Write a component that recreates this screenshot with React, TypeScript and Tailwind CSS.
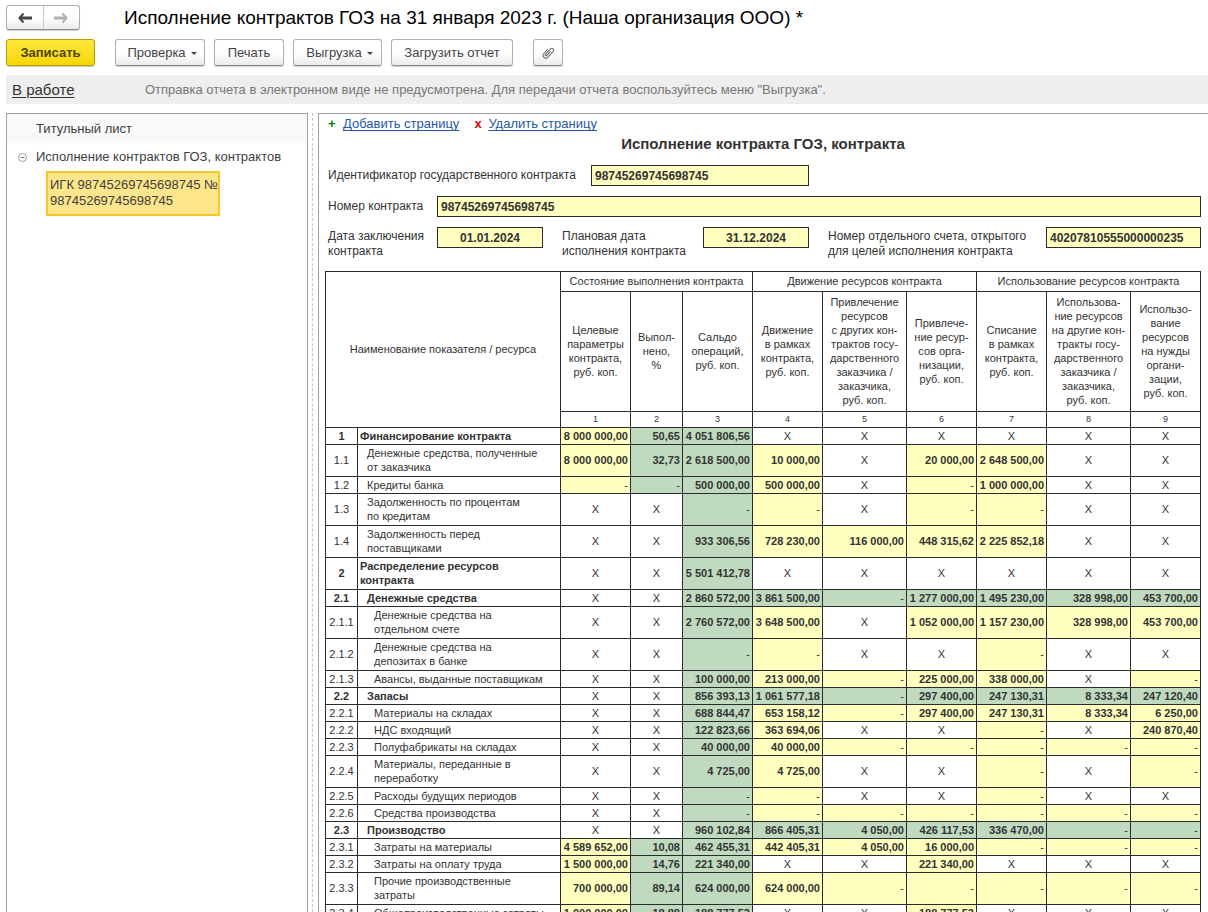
import { ReactNode } from "react";

type Row = { code: string; name: string; level: number; bold?: boolean; values: string };

const groups = [
  "Состояние выполнения контракта",
  "Движение ресурсов контракта",
  "Использование ресурсов контракта",
];

const columns = [
  "Целевые\nпараметры\nконтракта,\nруб. коп.",
  "Выпол-\nнено,\n%",
  "Сальдо\nопераций,\nруб. коп.",
  "Движение\nв рамках\nконтракта,\nруб. коп.",
  "Привлечение\nресурсов\nс других кон-\nтрактов госу-\nдарственного\nзаказчика /\nзаказчика,\nруб. коп.",
  "Привлече-\nние ресур-\nсов орга-\nнизации,\nруб. коп.",
  "Списание\nв рамках\nконтракта,\nруб. коп.",
  "Использова-\nние ресурсов\nна другие кон-\nтракты госу-\nдарственного\nзаказчика /\nзаказчика,\nруб. коп.",
  "Использо-\nвание\nресурсов\nна нужды\nоргани-\nзации,\nруб. коп.",
];

const rows: Row[] = [
  { code: "1", name: "Финансирование контракта", level: 0, bold: true, values: "8 000 000,00|50,65|4 051 806,56|X|X|X|X|X|X" },
  { code: "1.1", name: "Денежные средства, полученные\nот заказчика", level: 1, values: "8 000 000,00|32,73|2 618 500,00|10 000,00|X|20 000,00|2 648 500,00|X|X" },
  { code: "1.2", name: "Кредиты банка", level: 1, values: "-|-|500 000,00|500 000,00|X|-|1 000 000,00|X|X" },
  { code: "1.3", name: "Задолженность по процентам\nпо кредитам", level: 1, values: "X|X|-|-|X|-|-|X|X" },
  { code: "1.4", name: "Задолженность перед\nпоставщиками", level: 1, values: "X|X|933 306,56|728 230,00|116 000,00|448 315,62|2 225 852,18|X|X" },
  { code: "2", name: "Распределение ресурсов\nконтракта", level: 0, bold: true, values: "X|X|5 501 412,78|X|X|X|X|X|X" },
  { code: "2.1", name: "Денежные средства", level: 1, bold: true, values: "X|X|2 860 572,00|3 861 500,00|-|1 277 000,00|1 495 230,00|328 998,00|453 700,00" },
  { code: "2.1.1", name: "Денежные средства на\nотдельном счете", level: 2, values: "X|X|2 760 572,00|3 648 500,00|X|1 052 000,00|1 157 230,00|328 998,00|453 700,00" },
  { code: "2.1.2", name: "Денежные средства на\nдепозитах в банке", level: 2, values: "X|X|-|-|X|X|-|X|X" },
  { code: "2.1.3", name: "Авансы, выданные поставщикам", level: 2, values: "X|X|100 000,00|213 000,00|-|225 000,00|338 000,00|X|-" },
  { code: "2.2", name: "Запасы", level: 1, bold: true, values: "X|X|856 393,13|1 061 577,18|-|297 400,00|247 130,31|8 333,34|247 120,40" },
  { code: "2.2.1", name: "Материалы на складах", level: 2, values: "X|X|688 844,47|653 158,12|-|297 400,00|247 130,31|8 333,34|6 250,00" },
  { code: "2.2.2", name: "НДС входящий", level: 2, values: "X|X|122 823,66|363 694,06|X|X|-|X|240 870,40" },
  { code: "2.2.3", name: "Полуфабрикаты на складах", level: 2, values: "X|X|40 000,00|40 000,00|-|-|-|-|-" },
  { code: "2.2.4", name: "Материалы, переданные в\nпереработку", level: 2, values: "X|X|4 725,00|4 725,00|X|X|-|X|-" },
  { code: "2.2.5", name: "Расходы будущих периодов", level: 2, values: "X|X|-|-|X|X|-|X|X" },
  { code: "2.2.6", name: "Средства производства", level: 2, values: "X|X|-|-|-|-|-|-|-" },
  { code: "2.3", name: "Производство", level: 1, bold: true, values: "X|X|960 102,84|866 405,31|4 050,00|426 117,53|336 470,00|-|-" },
  { code: "2.3.1", name: "Затраты на материалы", level: 2, values: "4 589 652,00|10,08|462 455,31|442 405,31|4 050,00|16 000,00|-|-|-" },
  { code: "2.3.2", name: "Затраты на оплату труда", level: 2, values: "1 500 000,00|14,76|221 340,00|X|X|221 340,00|X|X|X" },
  { code: "2.3.3", name: "Прочие производственные\nзатраты", level: 2, values: "700 000,00|89,14|624 000,00|624 000,00|-|-|-|-|-" },
  { code: "2.3.4", name: "Общепроизводственные затраты", level: 2, values: "1 000 000,00|18,88|188 777,53|X|X|188 777,53|X|X|X" },
];

const indents = ["pl-[2px]", "pl-[9px]", "pl-4"];

// computed cells are green, editable ones are yellow
const cellClass = (row: Row, value: string, index: number) => {
  if (value === "X") return "text-center";
  const computed = index === 1 || index === 2 || (row.bold && row.level === 1);
  const weight = value === "-" ? "font-normal" : "font-bold";
  return computed
    ? `bg-[#c0dac0] text-right pr-[2px] ${weight}`
    : `bg-[#ffffc0] text-right pr-[2px] ${weight}`;
};

const ToolButton = ({ width, children, label }: { width: string; children: ReactNode; label?: string }) => (
  <button
    type="button"
    aria-label={label}
    className={`${width} h-[27px] flex items-center justify-center rounded-[3px] border border-[#b0b0b0] border-b-[#8c8c8c] bg-linear-to-b from-white from-50% to-[#ebebeb] shadow-[0_1px_1px_#d0d0d0] text-[13px] text-[#444]`}
  >
    {children}
  </button>
);

const Caret = () => (
  <svg width="6" height="3" viewBox="0 0 6 3" className="ml-[5px] mt-[2px]">
    <path d="M0 0h6L3 3z" fill="#444" />
  </svg>
);

const Arrow = ({ color, flip }: { color: string; flip?: boolean }) => (
  <svg width="14" height="12" viewBox="0 0 14 12" className={flip ? "rotate-180" : ""}>
    <path d="M5.500 1.500 1.500 6l4 4.500" fill="none" stroke={color} strokeWidth="2" />
    <path d="M1.500 6H14" fill="none" stroke={color} strokeWidth="3" />
  </svg>
);

const Clip = () => (
  <svg width="14" height="14" viewBox="0 0 14 14">
    <path
      transform="rotate(42 7 7)"
      d="M4.200 5v5.200a2.800 2.800 0 0 0 5.600 0V2.600a1.900 1.900 0 0 0-3.800 0v7.200a.9.9 0 0 0 1.800 0V4.500"
      fill="none"
      stroke="#666"
      strokeLinecap="round"
    />
  </svg>
);

const Header = () => (
  <header>
    <div className="flex items-center">
      <div className="flex h-[25px] w-[74px] rounded-[3px] border border-[#b0b0b0] border-b-[#8c8c8c] bg-linear-to-b from-white from-50% to-[#ebebeb] shadow-[0_1px_1px_#d0d0d0]">
        <button type="button" aria-label="Назад" className="flex flex-1 items-center justify-center border-r border-[#c8c8c8]">
          <Arrow color="#444" />
        </button>
        <button type="button" aria-label="Вперед" className="flex flex-1 items-center justify-center">
          <Arrow color="#b0b0b0" flip />
        </button>
      </div>
      <h1 className="ml-11 text-[19px] leading-6 text-black">
        Исполнение контрактов ГОЗ на 31 января 2023 г. (Наша организация ООО) *
      </h1>
    </div>

    <div className="mt-[9px] flex items-center gap-[9px]">
      <button
        type="button"
        className="mr-[11px] h-[27px] w-[89px] rounded-[3px] border border-[#b89f00] bg-linear-to-b from-[#ffe83a] to-[#f7d600] text-[13px] font-bold text-[#4d4600] shadow-[0_1px_1px_#c8c8c8]"
      >
        Записать
      </button>
      <ToolButton width="w-[90px]">
        <span className="ml-1">Проверка</span>
        <Caret />
      </ToolButton>
      <ToolButton width="w-[70px]">Печать</ToolButton>
      <ToolButton width="w-[89px]">
        <span className="ml-1">Выгрузка</span>
        <Caret />
      </ToolButton>
      <ToolButton width="w-[122px]">Загрузить отчет</ToolButton>
      <div className="ml-[11px]">
        <ToolButton width="w-[30px]" label="Присоединенные файлы">
          <Clip />
        </ToolButton>
      </div>
    </div>

    <div className="mt-[9px] flex h-[29px] items-center bg-[#eee] pl-[6px]">
      <a href="#" className="w-[133px] pt-px text-[15px] text-[#333] underline underline-offset-2">
        В работе
      </a>
      <p className="text-[13px] text-[#777]">
        Отправка отчета в электронном виде не предусмотрена. Для передачи отчета воспользуйтесь меню "Выгрузка".
      </p>
    </div>
  </header>
);

const Sidebar = () => (
  <nav className="w-[302px] shrink-0 border border-b-0 border-[#a0a0a0] text-[13px] text-[#404040]">
    <a href="#" className="block h-[29px] bg-[#f9f9f9] pl-[29px] leading-[29px]">
      Титульный лист
    </a>
    <div className="flex h-7 items-center">
      <button type="button" aria-label="Свернуть" className="mr-[9px] ml-[11px]">
        <svg width="9" height="9" viewBox="0 0 9 9" className="block">
          <circle cx="4.5" cy="4.5" r="4" fill="none" stroke="#999" />
          <path d="M2.500 4.500h4" stroke="#777" />
        </svg>
      </button>
      <a href="#">Исполнение контрактов ГОЗ, контрактов</a>
    </div>
    <a
      href="#"
      className="ml-[39px] block h-[45px] w-[174px] border-2 border-[#f5c828] bg-[#fce58a] pt-1 pl-[2px] leading-4 whitespace-pre"
    >
      {"ИГК 98745269745698745 №\n98745269745698745"}
    </a>
  </nav>
);

const field = "h-[21px] border border-[#2b2b2b] bg-[#ffffc0] px-[3px] text-[12px] font-bold text-[#333]";

const ContractForm = () => (
  <form className="pl-[3px] text-[12px] leading-[15px]">
    <div className="flex items-center">
      <label htmlFor="igk" className="w-[263px]">Идентификатор государственного контракта</label>
      <input id="igk" defaultValue="98745269745698745" className={`${field} w-[218px]`} />
    </div>
    <div className="mt-[10px] flex items-center">
      <label htmlFor="number" className="w-[109px]">Номер контракта</label>
      <input id="number" defaultValue="98745269745698745" className={`${field} min-w-0 flex-1`} />
    </div>
    <div className="mt-[10px] flex items-start">
      <label htmlFor="signed" className="w-[109px] pt-[2px] whitespace-pre-line">{"Дата заключения\nконтракта"}</label>
      <input id="signed" defaultValue="01.01.2024" className={`${field} w-[106px] text-center`} />
      <label htmlFor="planned" className="ml-[19px] w-[141px] pt-[2px] whitespace-pre-line">{"Плановая дата\nисполнения контракта"}</label>
      <input id="planned" defaultValue="31.12.2024" className={`${field} w-[106px] text-center`} />
      <label htmlFor="account" className="ml-[19px] flex-1 pt-[2px] whitespace-pre-line">
        {"Номер отдельного счета, открытого\nдля целей исполнения контракта"}
      </label>
      <input id="account" defaultValue="40207810555000000235" className={`${field} w-[155px]`} />
    </div>
  </form>
);

const ReportTable = () => (
  <table className="mt-3 w-full table-fixed border-collapse text-[11px] leading-[14px] [&_td]:border [&_td]:border-[#2b2b2b] [&_th]:border [&_th]:border-[#2b2b2b] [&_th]:pb-px [&_th]:font-normal">
    <colgroup>
      <col className="w-8" />
      <col />
      <col className="w-[70px]" />
      <col className="w-[52px]" />
      <col className="w-[70px]" />
      <col className="w-[70px]" />
      <col className="w-[84px]" />
      <col className="w-[70px]" />
      <col className="w-[70px]" />
      <col className="w-[84px]" />
      <col className="w-[70px]" />
    </colgroup>
    <thead>
      <tr className="h-5">
        <th colSpan={2} rowSpan={3}>Наименование показателя / ресурса</th>
        {groups.map((group) => (
          <th key={group} colSpan={3}>{group}</th>
        ))}
      </tr>
      <tr className="h-[120px]">
        {columns.map((column, i) => (
          <th key={i} className="whitespace-pre">{column}</th>
        ))}
      </tr>
      <tr className="h-4 text-[9px]">
        {columns.map((_, i) => (
          <th key={i}>{i + 1}</th>
        ))}
      </tr>
    </thead>
    <tbody>
      {rows.map((row) => (
        <tr key={row.code} className={row.name.includes("\n") ? "h-8 [&_td]:pb-[2px]" : "h-[17px]"}>
          <td className={row.bold ? "text-center font-bold" : "text-center"}>{row.code}</td>
          <td className={`${indents[row.level]} whitespace-pre ${row.bold ? "font-bold" : ""}`}>{row.name}</td>
          {row.values.split("|").map((value, i) => (
            <td key={i} className={`${cellClass(row, value, i)} whitespace-nowrap`}>{value}</td>
          ))}
        </tr>
      ))}
    </tbody>
  </table>
);

export default function App() {
  return (
    <div className="flex h-screen flex-col overflow-hidden bg-white pt-[5px] pl-[6px] font-['Liberation_Sans',Arial,sans-serif] text-[#333]">
      <Header />
      <div className="mt-[9px] flex min-h-0 flex-1">
        <Sidebar />
        <div className="mr-[5px] ml-1 w-px shrink-0 border-l border-dashed border-[#c8c8c8]" />
        <main className="min-w-0 flex-1 overflow-hidden border-t border-l border-[#a0a0a0] pr-[7px] pl-[6px]">
          <div className="flex h-5 items-center pl-[3px] text-[13px]">
            <span className="w-[15px] font-bold text-[#008000]">+</span>
            <a href="#" className="text-[#2457a6] underline underline-offset-2">Добавить страницу</a>
            <span className="ml-[15px] w-[14px] font-bold text-[#e00000]">x</span>
            <a href="#" className="text-[#2457a6] underline underline-offset-2">Удалить страницу</a>
          </div>
          <h2 className="mb-[11px] text-center text-[15px] leading-5 font-bold">Исполнение контракта ГОЗ, контракта</h2>
          <ContractForm />
          <ReportTable />
        </main>
      </div>
    </div>
  );
}
